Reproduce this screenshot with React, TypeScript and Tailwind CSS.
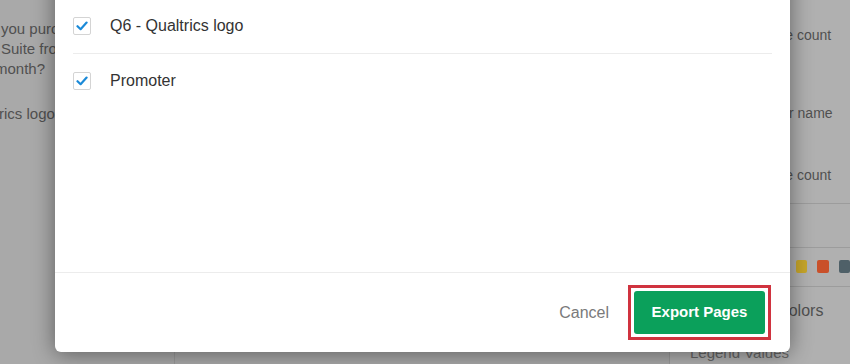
import React from "react";

const font = { fontFamily: '"Liberation Sans", Arial, sans-serif' };

function Check() {
  return (
    <div className="w-[18px] h-[18px] border border-[#d4d4d4] rounded-[2px] bg-white flex items-center justify-center shrink-0">
      <svg width="12" height="10" viewBox="0 0 12 10" fill="none">
        <path d="M1.5 5.2 L4.6 8.2 L10.6 1.6" stroke="#1b8ad8" strokeWidth="2.2" strokeLinecap="round" strokeLinejoin="round" />
      </svg>
    </div>
  );
}

export default function App() {
  return (
    <div className="relative w-[850px] h-[364px] overflow-hidden bg-[#a9a9a9] text-[14px]" style={font}>
      {/* background page */}
      <div className="flex h-full">
        <div className="w-[175px] shrink-0 border-r border-[#9a9a9a] text-[#505050]">
          <div className="pt-[19px] pl-[1px] leading-[20px] text-[15px]">
            <div>you purchase</div>
            <div>Suite from</div>
            <div className="-ml-[6px]">month?</div>
          </div>
          <div className="mt-[24px] text-[15px] -ml-[1px]">rics logo</div>
        </div>
        <div className="flex-1 border-r border-[#9a9a9a]" />
        <div className="w-[180px] shrink-0 bg-[#b0b0b0] text-[#505050] text-[14px] flex flex-col">
          <div className="pt-[25px] pl-[60px] h-[80px] whitespace-nowrap">Response count</div>
          <div className="pl-[77px] h-[64px] pt-[23px] whitespace-nowrap">Answer name</div>
          <div className="pl-[60px] h-[61px] pt-[22px] border-b border-[#9c9c9c] whitespace-nowrap">Response count</div>
          <div className="h-[44px] border-b border-[#9c9c9c]" />
          <div className="h-[39px] border-b border-[#9c9c9c] flex items-center gap-[10px] pl-[126px]">
            <div className="w-[12px] h-[13px] rounded-[2px] bg-[#c7a62a]" />
            <div className="w-[12px] h-[13px] rounded-[2px] bg-[#c9502a]" />
            <div className="w-[12px] h-[13px] rounded-[2px] bg-[#4f6068]" />
          </div>
          <div className="pl-[52px] pt-[12px] h-[44px] text-[16px] whitespace-nowrap">Default Colors</div>
          <div className="pl-[20px] pt-[11px] text-[15px] text-[#666] whitespace-nowrap">Legend Values</div>
        </div>
      </div>

      {/* dialog */}
      <div className="absolute left-[55px] top-[-30px] w-[735px] h-[382px] bg-white rounded-[6px] shadow-[0_2px_22px_rgba(0,0,0,0.45)] flex flex-col">
        <div className="h-[303px] pt-[30px] px-[18px] border-b border-[#ececec]">
          <div className="h-[54px] flex items-center gap-[19px] border-b border-[#ececec] pb-[1px]">
            <Check />
            <span className="text-[16px] text-[#333]">Q6 - Qualtrics logo</span>
          </div>
          <div className="h-[53px] flex items-center gap-[19px]">
            <Check />
            <span className="text-[16px] text-[#333]">Promoter</span>
          </div>
        </div>
        <div className="flex-1 flex items-center justify-end pr-[19px] gap-[19px]">
          <span className="text-[16px] text-[#7a7a7a]">Cancel</span>
          <div className="border-[3px] border-[#d0333f] p-[3px]">
            <div className="w-[131px] h-[43px] rounded-[3px] bg-[#0ba05b] flex items-center justify-center text-white font-bold text-[15px]">
              Export Pages
            </div>
          </div>
        </div>
      </div>
    </div>
  );
}
